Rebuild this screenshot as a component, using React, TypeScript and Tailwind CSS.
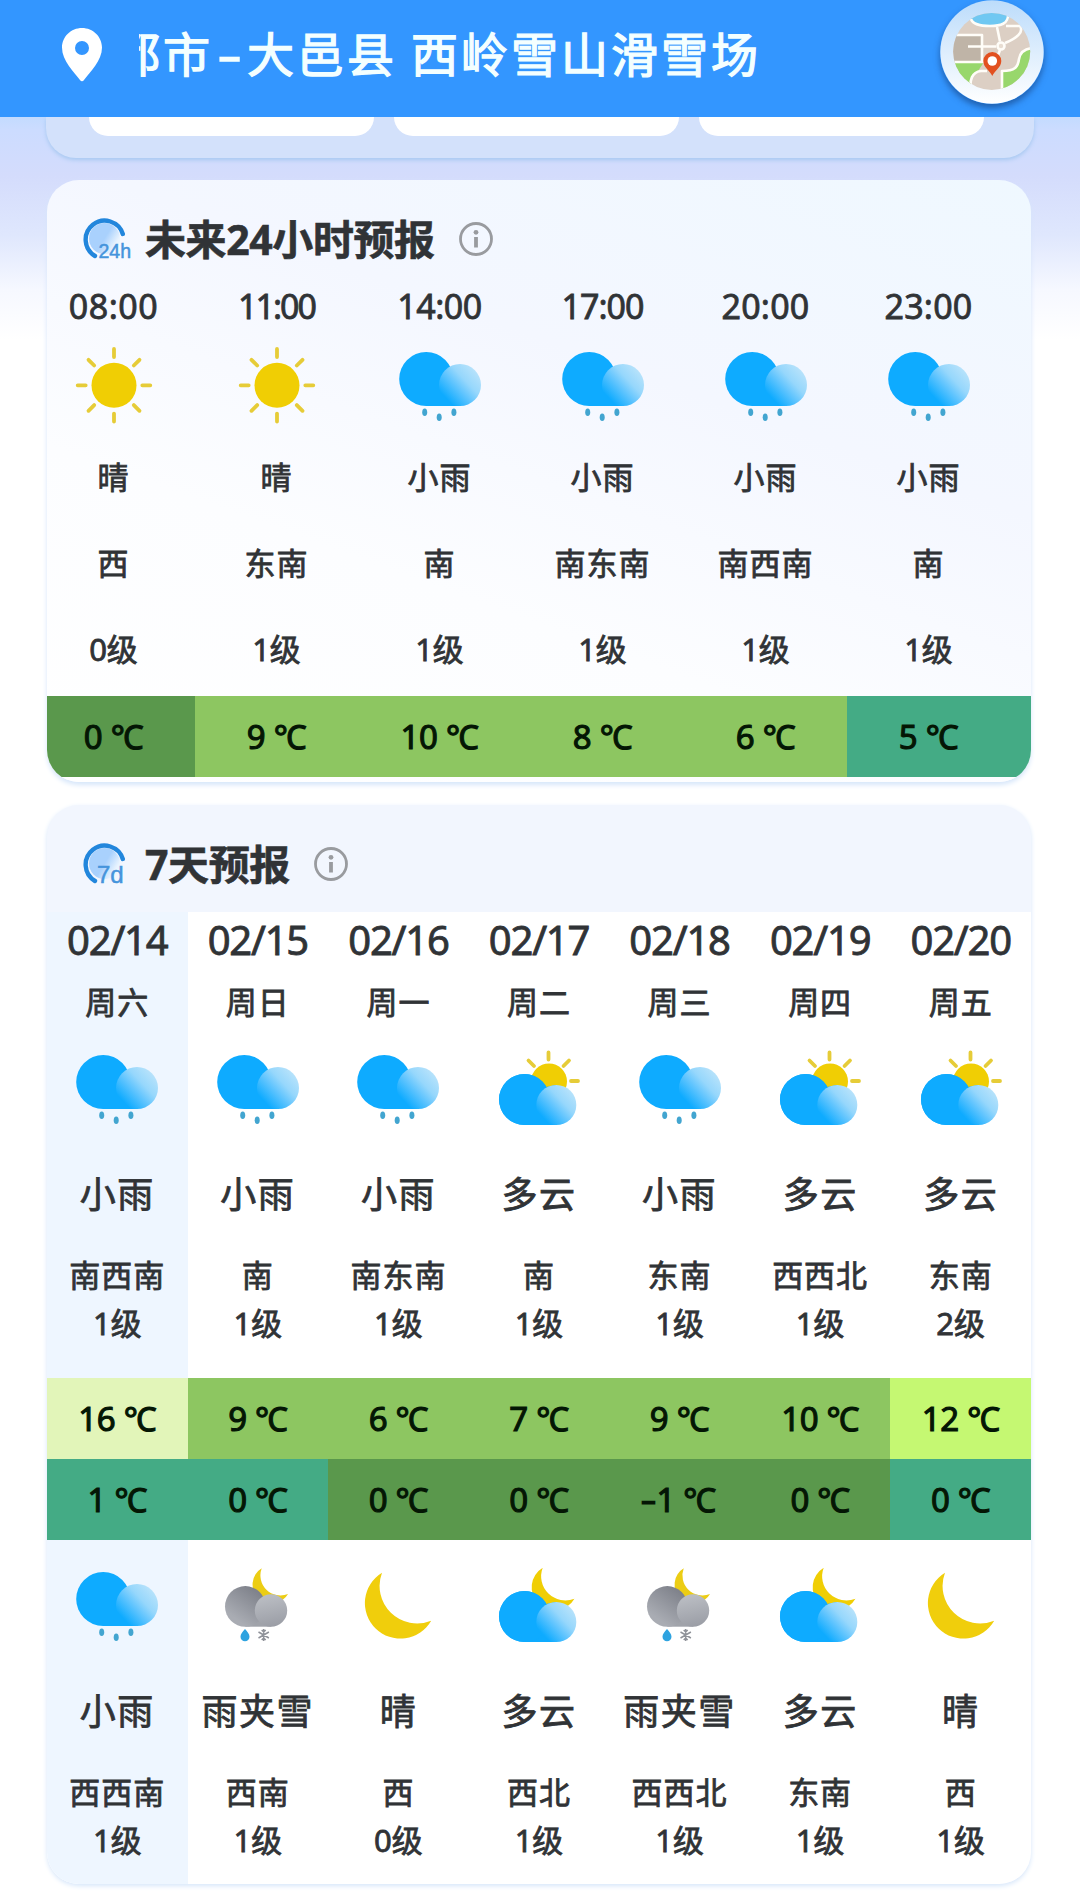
import type { ReactNode } from 'react';

type Weather = 'sunny' | 'rain' | 'cloudy' | 'cloudyNight' | 'sleetNight' | 'clearNight';

interface HourForecast {
  time: string;
  tracking: string;
  icon: Weather;
  text: string;
  wind: string;
  level: string;
  temp: string;
  band: string;
}

interface HalfDay {
  icon: Weather;
  text: string;
  wind: string;
  level: string;
  temp: string;
  band: string;
}

interface DayForecast {
  date: string;
  week: string;
  day: HalfDay;
  night: HalfDay;
}

/** Temperature band colors */
const DARK = 'bg-[#5a984c]';
const GREEN = 'bg-[#8dc661]';
const TEAL = 'bg-[#44ab85]';
const PALE = 'bg-[#e2f5b9]';
const LIME = 'bg-[#c5f872]';

const HOURS: HourForecast[] = [
  { time: '08:00', tracking: 'tracking-[0.5px]', icon: 'sunny', text: '晴', wind: '西', level: '0级', temp: '0 ℃', band: DARK },
  { time: '11:00', tracking: 'tracking-[-2px]', icon: 'sunny', text: '晴', wind: '东南', level: '1级', temp: '9 ℃', band: GREEN },
  { time: '14:00', tracking: 'tracking-[-0.5px]', icon: 'rain', text: '小雨', wind: '南', level: '1级', temp: '10 ℃', band: GREEN },
  { time: '17:00', tracking: 'tracking-[-1px]', icon: 'rain', text: '小雨', wind: '南东南', level: '1级', temp: '8 ℃', band: GREEN },
  { time: '20:00', tracking: 'tracking-[0.2px]', icon: 'rain', text: '小雨', wind: '南西南', level: '1级', temp: '6 ℃', band: GREEN },
  { time: '23:00', tracking: 'tracking-[0.2px]', icon: 'rain', text: '小雨', wind: '南', level: '1级', temp: '5 ℃', band: TEAL },
];

const DAYS: DayForecast[] = [
  {
    date: '02/14',
    week: '周六',
    day: { icon: 'rain', text: '小雨', wind: '南西南', level: '1级', temp: '16 ℃', band: PALE },
    night: { icon: 'rain', text: '小雨', wind: '西西南', level: '1级', temp: '1 ℃', band: TEAL },
  },
  {
    date: '02/15',
    week: '周日',
    day: { icon: 'rain', text: '小雨', wind: '南', level: '1级', temp: '9 ℃', band: GREEN },
    night: { icon: 'sleetNight', text: '雨夹雪', wind: '西南', level: '1级', temp: '0 ℃', band: TEAL },
  },
  {
    date: '02/16',
    week: '周一',
    day: { icon: 'rain', text: '小雨', wind: '南东南', level: '1级', temp: '6 ℃', band: GREEN },
    night: { icon: 'clearNight', text: '晴', wind: '西', level: '0级', temp: '0 ℃', band: DARK },
  },
  {
    date: '02/17',
    week: '周二',
    day: { icon: 'cloudy', text: '多云', wind: '南', level: '1级', temp: '7 ℃', band: GREEN },
    night: { icon: 'cloudyNight', text: '多云', wind: '西北', level: '1级', temp: '0 ℃', band: DARK },
  },
  {
    date: '02/18',
    week: '周三',
    day: { icon: 'rain', text: '小雨', wind: '东南', level: '1级', temp: '9 ℃', band: GREEN },
    night: { icon: 'sleetNight', text: '雨夹雪', wind: '西西北', level: '1级', temp: '-1 ℃', band: DARK },
  },
  {
    date: '02/19',
    week: '周四',
    day: { icon: 'cloudy', text: '多云', wind: '西西北', level: '1级', temp: '10 ℃', band: GREEN },
    night: { icon: 'cloudyNight', text: '多云', wind: '东南', level: '1级', temp: '0 ℃', band: DARK },
  },
  {
    date: '02/20',
    week: '周五',
    day: { icon: 'cloudy', text: '多云', wind: '东南', level: '2级', temp: '12 ℃', band: LIME },
    night: { icon: 'clearNight', text: '晴', wind: '西', level: '1级', temp: '0 ℃', band: TEAL },
  },
];

/** Shared gradients, referenced by id from the weather icons */
const IconDefs = () => (
  <svg className="absolute h-0 w-0" aria-hidden="true">
    <defs>
      <linearGradient id="puff" x1="0.95" y1="0.25" x2="0.25" y2="0.9">
        <stop offset="0" stopColor="#b6e2fb" />
        <stop offset="0.35" stopColor="#96d7fc" />
        <stop offset="0.6" stopColor="#62c5fe" />
        <stop offset="1" stopColor="#0eabff" />
      </linearGradient>
      <linearGradient id="gray" x1="0.75" y1="0.1" x2="0.25" y2="0.8">
        <stop offset="0" stopColor="#7f828b" />
        <stop offset="1" stopColor="#a9acb3" />
      </linearGradient>
      <linearGradient id="grayPuff" x1="0.3" y1="0.1" x2="0.5" y2="1">
        <stop offset="0" stopColor="#b9bcc2" />
        <stop offset="1" stopColor="#9b9ea6" />
      </linearGradient>
      <linearGradient id="dial" x1="0" y1="0.2" x2="1" y2="0.8">
        <stop offset="0.5" stopColor="#a9d1fd" />
        <stop offset="0.85" stopColor="#eaf4fe" />
      </linearGradient>
      <linearGradient id="mapRim" x1="0" y1="0" x2="0" y2="1">
        <stop offset="0" stopColor="#bcdcfb" />
        <stop offset="1" stopColor="#ffffff" />
      </linearGradient>
      <clipPath id="mapDisc">
        <circle cx="51.7" cy="51.4" r="38.5" />
      </clipPath>
    </defs>
  </svg>
);

const MOON = 'M29 10.7A35.5 35.5 0 1 0 78.2 58.7A37.5 37.5 0 0 1 29 10.7Z';

const BlueCloud = () => (
  <>
    <path d="M30.5 29a25.5 25.5 0 0 0 0 51H62V40L52 42A25.5 25.5 0 0 0 30.5 29Z" fill="#0eabff" />
    <circle cx="30.5" cy="54.5" r="25.5" fill="#0eabff" />
    <circle cx="62.3" cy="60" r="20" fill="url(#puff)" />
  </>
);

const ICONS: Record<Weather, ReactNode> = {
  sunny: (
    <>
      <circle cx="45" cy="43.3" r="22.5" fill="#f0ce04" />
      <path
        d="M45 7v8M45 71.6v8M8.7 43.3h8M73.3 43.3h8M19.5 17.8l5.7 5.7M64.8 63.1l5.7 5.7M70.5 17.8l-5.7 5.7M25.2 63.1l-5.7 5.7"
        stroke="#e6cc38"
        strokeWidth="3.8"
        strokeLinecap="round"
      />
    </>
  ),
  rain: (
    <>
      <circle cx="31.2" cy="37" r="27" fill="#0eabff" />
      <path d="M31 36h34v28H31z" fill="#0eabff" />
      <circle cx="65" cy="43" r="21" fill="url(#puff)" />
      <g fill="#42a5d0">
        <ellipse cx="29.7" cy="70.3" rx="2.5" ry="3.8" />
        <ellipse cx="44.2" cy="75.3" rx="2.5" ry="3.8" />
        <ellipse cx="58.9" cy="70.3" rx="2.5" ry="3.8" />
      </g>
    </>
  ),
  cloudy: (
    <>
      <circle cx="55" cy="36.5" r="18" fill="#f0ce04" />
      <path
        d="M54.5 7.5v7M77 36h7M69.5 21l5.5-5.5M40 21l-5.5-5.5"
        stroke="#e6cc38"
        strokeWidth="3.8"
        strokeLinecap="round"
      />
      <BlueCloud />
    </>
  ),
  cloudyNight: (
    <>
      <path d={MOON} transform="translate(30 -1.2) scale(0.645)" fill="#f0ce04" />
      <BlueCloud />
    </>
  ),
  sleetNight: (
    <>
      <path d={MOON} transform="translate(33.2 0.6) scale(0.535)" fill="#eccd14" />
      <path d="M32.3 44h26v20.7h-26z" fill="#a0a3aa" />
      <circle cx="32.3" cy="44.4" r="20.3" fill="url(#gray)" />
      <circle cx="58" cy="48.5" r="16.2" fill="url(#grayPuff)" />
      <path d="M32 67c2.5 3 4.5 5 4.5 7.8a4.5 4.5 0 0 1-9 0C27.5 72 29.5 70 32 67Z" fill="#2ea3e0" />
      <path
        d="M50.7 67v12M45.5 70l10.4 6M45.5 76l10.4-6M48.7 68l2 2 2-2M48.7 78l2-2 2 2"
        stroke="#8f9299"
        strokeWidth="1.5"
      />
    </>
  ),
  clearNight: <path d={MOON} fill="#f0ce0c" />,
};

function WeatherIcon({ name }: { name: Weather }) {
  return (
    <svg className="h-[90px] w-[90px] shrink-0" viewBox="0 0 90 90" fill="none">
      {ICONS[name]}
    </svg>
  );
}

function PinIcon() {
  return (
    <svg className="h-[54px] w-10" viewBox="0 0 40 54">
      <path
        fill="#fff"
        fillRule="evenodd"
        d="M20 0C9 0 0 8.7 0 19.6 0 33 12 44 18.2 52.3a2.2 2.2 0 0 0 3.6 0C28 44 40 33 40 19.6 40 8.7 31 0 20 0Zm0 13a7 7 0 1 1 0 14 7 7 0 0 1 0-14Z"
      />
    </svg>
  );
}

function MapButton() {
  return (
    <button type="button" aria-label="地图" className="h-[104px] w-[104px] rounded-full shadow-[0_4px_6px_rgba(20,60,120,0.6)]">
      <svg className="h-[104px] w-[104px]" viewBox="0 0 104 104" fill="none">
        <circle cx="52" cy="52" r="51.7" fill="url(#mapRim)" />
        <g clipPath="url(#mapDisc)">
          <path d="M13 12h78v80H13z" fill="#dccfc4" />
          <path d="M10 35h32v27H10z" fill="#bfb4a7" />
          <path d="M10 62h34l-6 9c-6 3-8 9-7 20H10z" fill="#98d76c" />
          <path d="M92 48c-8 1-12 5-13 11-1 8-4 12-17 13v20h30z" fill="#98d76c" />
          <ellipse cx="50" cy="18" rx="19" ry="7.5" fill="#70c8f2" />
          <g stroke="#fffdf8" strokeWidth="2.6" strokeLinejoin="round">
            <path d="M31 19c2 6 12 7 19 7 10 0 19-2 18-12" />
            <path d="M10 35h32v27M28 46.5h28M10 62h34" />
            <path d="M57 27l3 14.5M66 26h14c4 6-3 12-15 17" />
            <circle cx="61" cy="46" r="3.5" fill="#e8ddd2" />
            <path d="M60 50l-3 8M92 48c-8 1-12 5-13 11-1 8-4 12-17 12v22" />
            <path d="M31 92c-2-12 1-20 10-21h6" />
          </g>
        </g>
        <path d="M52.3 76c-2-5-9-8.5-9-15a9 9 0 0 1 18 0c0 6.5-7 10-9 15Z" fill="#e2501f" />
        <circle cx="52.3" cy="61" r="4.8" fill="#fff" />
      </svg>
    </button>
  );
}

function DialIcon({ label }: { label: string }) {
  return (
    <svg className="h-[46px] w-[50px]" viewBox="0 0 50 46">
      <circle cx="21.5" cy="22.5" r="15.5" fill="url(#dial)" />
      <path
        d="M12 40A19 19 0 1 1 39.8 18"
        fill="none"
        stroke="#2286dc"
        strokeWidth="4.4"
        strokeLinecap="round"
      />
      <text
        x={label === '7d' ? 14 : 15.5}
        y="42"
        className="[font-family:'Liberation_Sans',sans-serif]"
        fontSize={label === '7d' ? 24 : 19.5}
        fill="#4594dc"
        stroke="#4594dc"
        strokeWidth="0.5"
      >
        {label}
      </text>
    </svg>
  );
}

function InfoIcon() {
  return (
    <svg className="h-[36px] w-[36px]" viewBox="0 0 36 36" fill="none">
      <circle cx="18" cy="18" r="15.5" stroke="#999b9f" strokeWidth="2.8" />
      <circle cx="18" cy="11.3" r="2.4" fill="#999b9f" />
      <path d="M18 16v10.5" stroke="#999b9f" strokeWidth="3.8" />
    </svg>
  );
}

function CardTitle({ dial, title }: { dial: string; title: string }) {
  return (
    <div className="flex items-center pl-[36px]">
      <DialIcon label={dial} />
      <h2 className="ml-[12px] text-[41px] leading-[46px] font-bold tracking-[-0.4px] whitespace-nowrap [-webkit-text-stroke:0.6px]">
        {title}
      </h2>
      <span className="ml-[23px]">
        <InfoIcon />
      </span>
    </div>
  );
}

/** Centered single line of text with a fixed row height */
function Line({ className, children }: { className: string; children: ReactNode }) {
  return <div className={`flex items-center justify-center whitespace-nowrap ${className}`}>{children}</div>;
}

function Band({ color, temp }: { color: string; temp: string }) {
  const negative = temp.startsWith('-');

  return (
    <Line className={`h-[81px] w-full text-[33px] tracking-[-0.3px] text-[#041604] [-webkit-text-stroke:1.1px] ${color}`}>
      {negative && <span className="mr-[3px] inline-block scale-x-150">-</span>}
      <span className="whitespace-pre">{negative ? temp.slice(1) : temp}</span>
    </Line>
  );
}

function HalfDayInfo({ data }: { data: HalfDay }) {
  return (
    <>
      <WeatherIcon name={data.icon} />
      <Line className="mt-[36px] h-12 text-[36px] tracking-[1.5px]">{data.text}</Line>
      <Line className="mt-[32px] h-12 text-[31px] tracking-[1px]">{data.wind}</Line>
      <Line className="h-12 text-[31px]">{data.level}</Line>
    </>
  );
}

export default function App() {
  return (
    <div className="h-[1897px] w-[1080px] overflow-hidden bg-white bg-[linear-gradient(180deg,#c3dbff_117px,#ccdcff_130px,#d4dcfc_176px,#dfe7fd_235px,#f6f8ff_290px,#ffffff_340px)] [font-family:'Noto_Sans','Noto_Sans_CJK_SC',sans-serif] font-normal text-[#303336] [-webkit-text-stroke:0.8px]">
      <IconDefs />

      {/* Location header */}
      <header className="relative flex h-[117px] items-start bg-[#3396ff] pr-9 pl-[62px] text-[#f4ffff]">
        <div className="pt-7">
          <PinIcon />
        </div>
        <div className="mt-[19px] ml-[37px] flex h-[70px] flex-1 items-center overflow-hidden text-[47px] tracking-[3px] whitespace-nowrap [-webkit-text-stroke:1.3px]">
          <span className="-ml-[26px]">都市</span>
          <span className="-ml-[1px] w-[35px] text-center tracking-normal">
            <span className="inline-block origin-center scale-x-[1.6]">-</span>
          </span>
          <span>大邑县</span>
          <span className="ml-[14px]">西岭雪山滑雪场</span>
        </div>
        <MapButton />
      </header>

      {/* Bottom edge of the scrolled-off card */}
      <div className="mx-[46px] flex h-[41px] gap-[20px] rounded-b-[30px] bg-[#d3e1fb] pr-[50px] pl-[43px] shadow-[0_2px_4px_#a6c8f0]">
        <div className="h-[19px] flex-1 rounded-b-[24px] bg-white" />
        <div className="h-[19px] flex-1 rounded-b-[24px] bg-white" />
        <div className="h-[19px] flex-1 rounded-b-[24px] bg-white" />
      </div>

      {/* 24 hour forecast */}
      <section className="mt-[22px] ml-[47px] h-[602px] w-[984px] overflow-hidden rounded-[32px] bg-[linear-gradient(200deg,#eff8ff_0%,#f4f7ff_35%,#fcfdff_65%,#ffffff_100%)] pt-[36px] shadow-[0_3px_5px_#d6e6fa]">
        <CardTitle dial="24h" title="未来24小时预报" />
        <div className="mt-[20px] -ml-[15px] flex">
          {HOURS.map((hour) => (
            <div key={hour.time} className="flex w-[163px] shrink-0 flex-col items-center last:w-[186px] last:[&>*]:pr-[23px]">
              <Line className={`h-12 text-[34px] ${hour.tracking}`}>{hour.time}</Line>
              <div className="mt-[12px] h-[90px]">
                <WeatherIcon name={hour.icon} />
              </div>
              <Line className="mt-[21px] h-12 text-[31px] tracking-[1px]">{hour.text}</Line>
              <Line className="mt-[38px] h-12 text-[31px] tracking-[1px]">{hour.wind}</Line>
              <Line className="mt-[38px] mb-[23px] h-12 text-[31px]">{hour.level}</Line>
              <Band color={hour.band} temp={hour.temp} />
            </div>
          ))}
        </div>
      </section>

      {/* 7 day forecast */}
      <section className="mt-[23px] ml-[47px] h-[1079px] w-[984px] overflow-hidden rounded-[32px] bg-[#f2f6fe] pt-[36px] shadow-[0_2px_5px_#d6e6fa]">
        <CardTitle dial="7d" title="7天预报" />
        <div className="mt-[25px] grid h-[972px] grid-cols-7 bg-white">
          {DAYS.map((item) => (
            <div key={item.date} className="flex flex-col items-center first:bg-[#eef6ff]">
              <Line className="mt-[4px] h-12 text-[40px] tracking-[-1.2px]">{item.date}</Line>
              <Line className="mt-[14px] mb-[19px] h-12 text-[31px] tracking-[1px]">{item.week}</Line>
              <HalfDayInfo data={item.day} />
              <div className="mt-[31px] mb-[22px] w-full">
                <Band color={item.day.band} temp={item.day.temp} />
                <Band color={item.night.band} temp={item.night.temp} />
              </div>
              <HalfDayInfo data={item.night} />
            </div>
          ))}
        </div>
      </section>
    </div>
  );
}
